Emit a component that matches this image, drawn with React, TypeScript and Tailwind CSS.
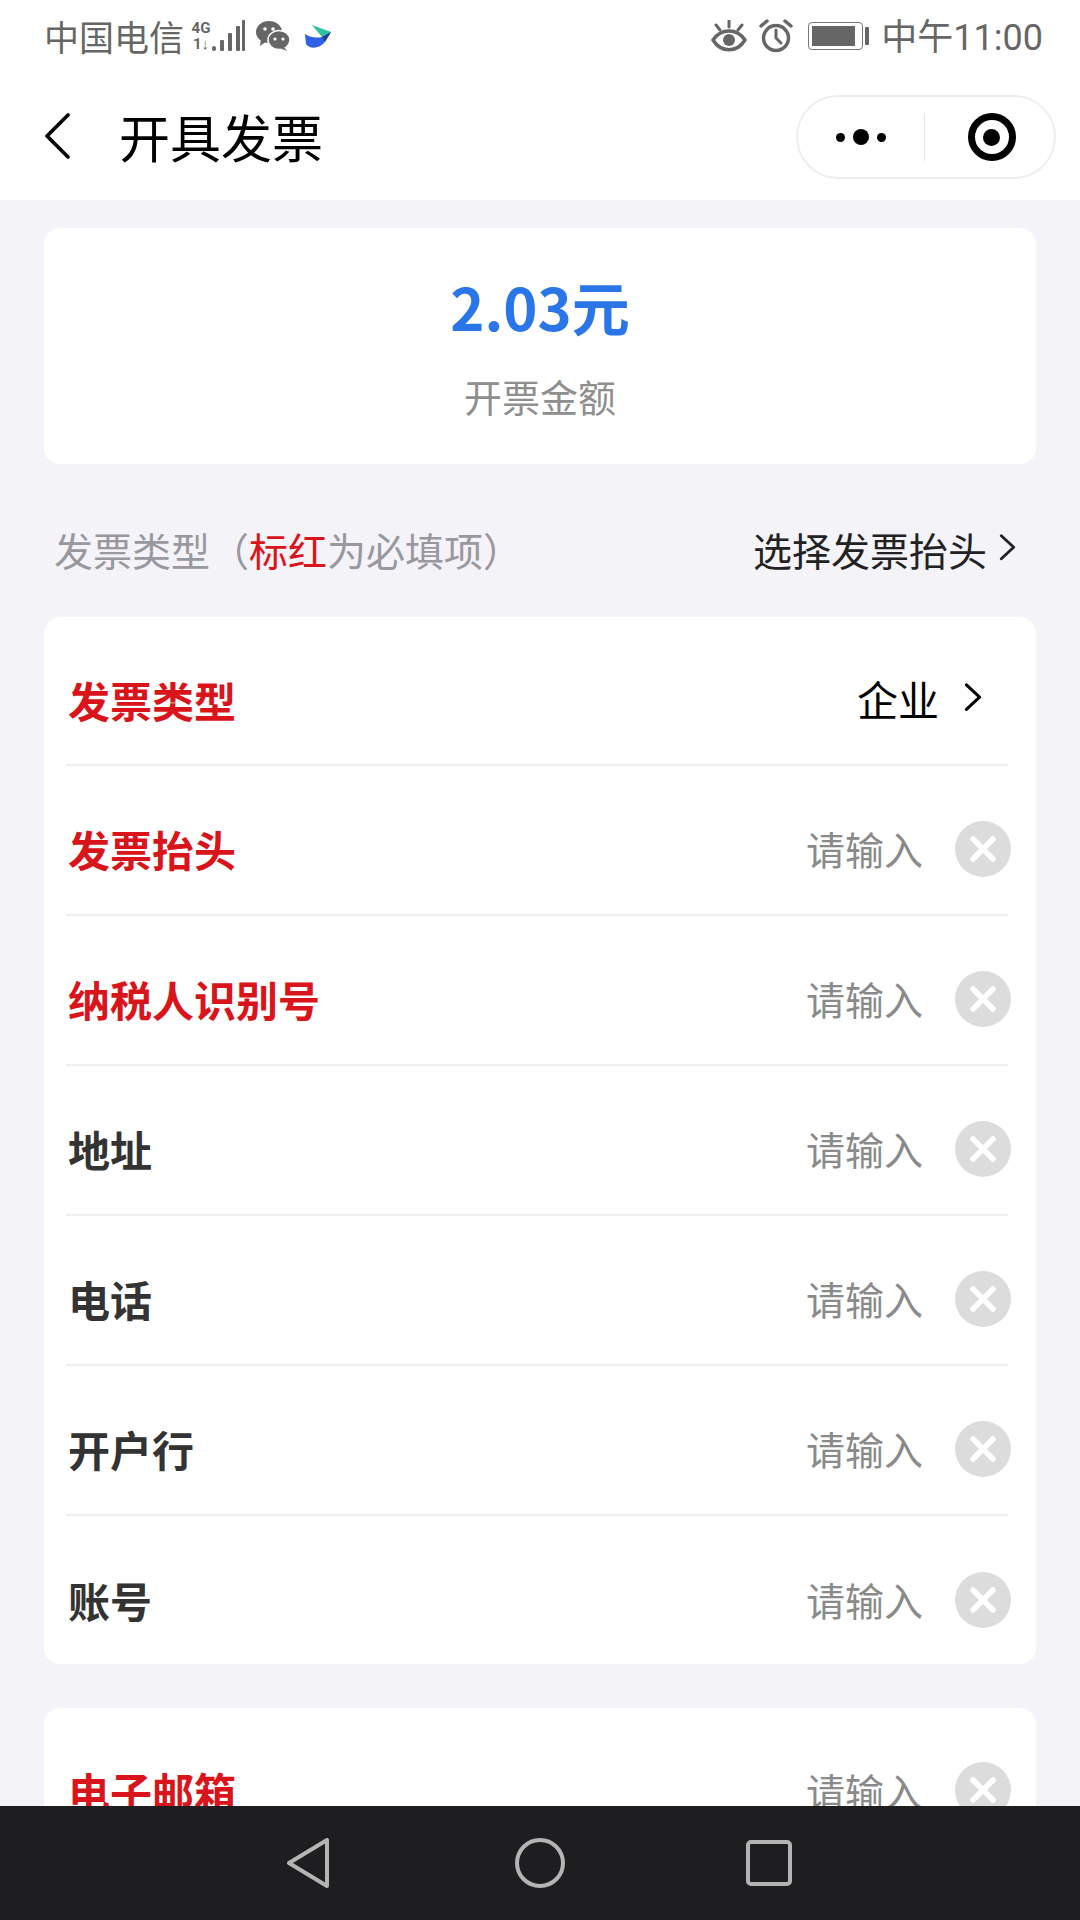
const FONT = "font-['Noto_Sans_CJK_SC','Noto_Sans',sans-serif]";

const FIELDS = [
  { label: "发票抬头", required: true },
  { label: "纳税人识别号", required: true },
  { label: "地址", required: false },
  { label: "电话", required: false },
  { label: "开户行", required: false },
  { label: "账号", required: false },
];

function Chevron({ className }: { className: string }) {
  return (
    <svg viewBox="0 0 18 34" className={className} fill="none" stroke="currentColor" strokeWidth="3.2" strokeLinecap="round" strokeLinejoin="round">
      <path d="M2 2 L16 15 L2 28" />
    </svg>
  );
}

function ClearIcon() {
  return (
    <svg viewBox="0 0 56 56" className="w-[56px] h-[56px] shrink-0 mr-[-3px]">
      <circle cx="28" cy="28" r="28" fill="#dcdcdc" />
      <path d="M18 18 L38 38 M38 18 L18 38" stroke="#fff" strokeWidth="5.5" strokeLinecap="round" />
    </svg>
  );
}

function InputValue() {
  return (
    <div className="flex items-center">
      <span className="text-[39px] text-[#8a8a8a]">请输入</span>
      <span className="w-[32px]" />
      <ClearIcon />
    </div>
  );
}

function InputRow({ label, required, last }: { label: string; required: boolean; last?: boolean }) {
  return (
    <div className={`h-[150px] pt-[17px] ml-[22px] mr-[28px] flex items-center justify-between ${last ? "" : "border-b-2 border-[#eeeef3]"}`}>
      <span className={`text-[42px] font-bold ml-[2px] ${required ? "text-[#d9141a]" : "text-[#333333]"}`}>{label}</span>
      <InputValue />
    </div>
  );
}

function StatusBar() {
  return (
    <div className="h-[72px] flex items-center justify-between pl-[44px] pr-[37px] text-[#666666] shrink-0">
      <div className="flex items-center">
        <span className="text-[35px] leading-none mt-[-2px]">中国电信</span>
        <div className="ml-[7px] flex flex-col items-center text-[15px] leading-[16px] font-bold w-[20px] font-['Roboto']">
          <span>4G</span>
          <span>1↓</span>
        </div>
        <svg viewBox="0 0 34 34" className="w-[34px] h-[34px]" fill="#666666">
          <rect x="1" y="27" width="4" height="5" rx="2" />
          <rect x="9" y="21" width="4" height="11" rx="1" />
          <rect x="17" y="14" width="4" height="18" rx="1" />
          <rect x="25" y="7" width="4" height="25" rx="1" />
          <rect x="31" y="1" width="3" height="31" rx="1" />
        </svg>
        <svg viewBox="0 0 34 30" className="w-[34px] h-[30px] ml-[11px]" fill="#666666">
          <ellipse cx="13" cy="11" rx="13" ry="11" />
          <path d="M5 18 L4 25 L11 20 Z" />
          <ellipse cx="23" cy="19" rx="11" ry="9.5" stroke="#fff" strokeWidth="1.5" />
          <path d="M28 26 L31 30 L24 27 Z" />
          <circle cx="9" cy="8" r="1.8" fill="#fff" />
          <circle cx="17" cy="8" r="1.8" fill="#fff" />
          <circle cx="19" cy="18" r="1.6" fill="#fff" />
          <circle cx="27" cy="18" r="1.6" fill="#fff" />
        </svg>
        <svg viewBox="0 0 26 23" className="w-[26px] h-[23px] ml-[15px]">
          <path d="M7 0 L26 7 L17 12 Z" fill="#2cc2a2" />
          <path d="M0 9 C6 13 12 13 17 12 L26 7 L19 18 C14 24 4 24 1 19 Z" fill="#2f62e6" />
          <path d="M17 12 L26 7 L20 17 Z" fill="#1e3f94" />
        </svg>
      </div>
      <div className="flex items-center">
        <svg viewBox="0 0 36 32" className="w-[36px] h-[32px]" fill="none" stroke="#666666">
          <path d="M2 20 C10 8 26 8 34 20 C26 33 10 33 2 20 Z" strokeWidth="3.5" />
          <circle cx="18" cy="20" r="6" fill="#666666" strokeWidth="0" />
          <path d="M18 1 V7 M5 5 L9 10 M31 5 L27 10" strokeWidth="3" strokeLinecap="round" />
        </svg>
        <svg viewBox="0 0 34 34" className="w-[34px] h-[34px] ml-[12px]" fill="none" stroke="#666666" strokeWidth="3.5">
          <circle cx="17" cy="19" r="12.5" />
          <path d="M17 11 V19 L22 24" strokeLinecap="round" strokeWidth="3" />
          <path d="M2 7 L8 2 M32 7 L26 2" strokeLinecap="round" />
        </svg>
        <div className="ml-[15px] flex items-center">
          <div className="w-[55px] h-[28px] border border-[#777777] rounded-[4px] p-[3px]">
            <div className="w-[43px] h-full bg-[#666666]" />
          </div>
          <div className="w-[4px] h-[18px] bg-[#666666] rounded-[1px] ml-[2px]" />
        </div>
        <span className="ml-[12px] mt-[4px] text-[36px] leading-none font-['Roboto','Noto_Sans_CJK_SC',sans-serif]">中午11:00</span>
      </div>
    </div>
  );
}

function NavBar() {
  return (
    <div className="h-[114px] bg-[#1e1e20] flex items-center justify-center pr-[2px] shrink-0 relative z-10">
      <svg viewBox="0 0 42 50" className="w-[42px] h-[50px]" fill="none" stroke="#b4b4b4" strokeWidth="4" strokeLinejoin="round">
        <path d="M40 2 V48 L2 25 Z" />
      </svg>
      <svg viewBox="0 0 50 50" className="w-[50px] h-[50px] ml-[186px]" fill="none" stroke="#b4b4b4" strokeWidth="4">
        <circle cx="25" cy="25" r="23" />
      </svg>
      <svg viewBox="0 0 46 46" className="w-[46px] h-[46px] ml-[181px]" fill="none" stroke="#b4b4b4" strokeWidth="4">
        <rect x="2" y="2" width="42" height="42" rx="3" />
      </svg>
    </div>
  );
}

export default function App() {
  return (
    <div className={`w-[1080px] h-[1920px] bg-[#f3f3f8] flex flex-col overflow-hidden ${FONT}`}>
      <div className="bg-white h-[200px] shrink-0">
        <StatusBar />
        {/* title bar with the mini program capsule */}
        <div className="h-[128px] flex items-center justify-between pl-[44px] pr-[24px]">
          <div className="flex items-center">
            <svg viewBox="0 0 26 46" className="w-[26px] h-[46px]" fill="none" stroke="#000" strokeWidth="3.6" strokeLinecap="round" strokeLinejoin="round">
              <path d="M24 2 L3 23 L24 44" />
            </svg>
            <span className="ml-[49px] text-[51px] leading-none text-black">开具发票</span>
          </div>
          <div className="w-[260px] h-[84px] mt-[2px] rounded-full border-2 border-[#eeeeee] flex items-center">
            <div className="w-[126px] flex items-center justify-center gap-[8px]">
              <span className="w-[9px] h-[9px] rounded-full bg-black" />
              <span className="w-[16px] h-[16px] rounded-full bg-black" />
              <span className="w-[9px] h-[9px] rounded-full bg-black" />
            </div>
            <div className="w-px h-[48px] bg-[#e8e8e8]" />
            <div className="flex-1 flex items-center justify-center pl-[4px]">
              <div className="w-[48px] h-[48px] rounded-full border-[7px] border-black flex items-center justify-center">
                <div className="w-[17px] h-[17px] rounded-full bg-black" />
              </div>
            </div>
          </div>
        </div>
      </div>

      <div className="flex-1 min-h-0 overflow-hidden px-[44px] pt-[28px]">
        <div className="h-[236px] bg-white rounded-[16px] flex flex-col items-center">
          <div className="mt-[38px] h-[80px] flex items-center text-[58px] font-bold text-[#2a76e8] leading-none">2.03元</div>
          <div className="mt-[31px] text-[38px] leading-none text-[#8f8f8f]">开票金额</div>
        </div>

        <div className="h-[153px] flex items-center justify-between pl-[10px] pr-[20px] pt-[17px]">
          <span className="text-[39px] text-[#98989e]">
            发票类型（<span className="text-[#d9141a]">标红</span>为必填项）
          </span>
          <div className="flex items-center text-[#222222]">
            <span className="text-[39px]">选择发票抬头</span>
            <Chevron className="w-[17px] h-[30px] ml-[12px]" />
          </div>
        </div>

        <div className="h-[1047px] bg-white rounded-[16px]">
          <div className="h-[149px] pt-[17px] ml-[22px] mr-[28px] flex items-center justify-between border-b-2 border-[#eeeef3]">
            <span className="text-[42px] font-bold ml-[2px] text-[#d9141a]">发票类型</span>
            <div className="flex items-center mr-[26px] text-black">
              <span className="text-[41px]">企业</span>
              <Chevron className="w-[18px] h-[32px] ml-[25px]" />
            </div>
          </div>
          {FIELDS.map((f, i) => (
            <InputRow key={f.label} label={f.label} required={f.required} last={i === FIELDS.length - 1} />
          ))}
        </div>

        <div className="mt-[44px] bg-white rounded-[16px] h-[200px]">
          <div className="h-[164px] ml-[22px] mr-[28px] flex items-center justify-between">
            <span className="text-[42px] font-bold ml-[2px] text-[#d9141a]">电子邮箱</span>
            <InputValue />
          </div>
        </div>
      </div>

      <NavBar />
    </div>
  );
}
